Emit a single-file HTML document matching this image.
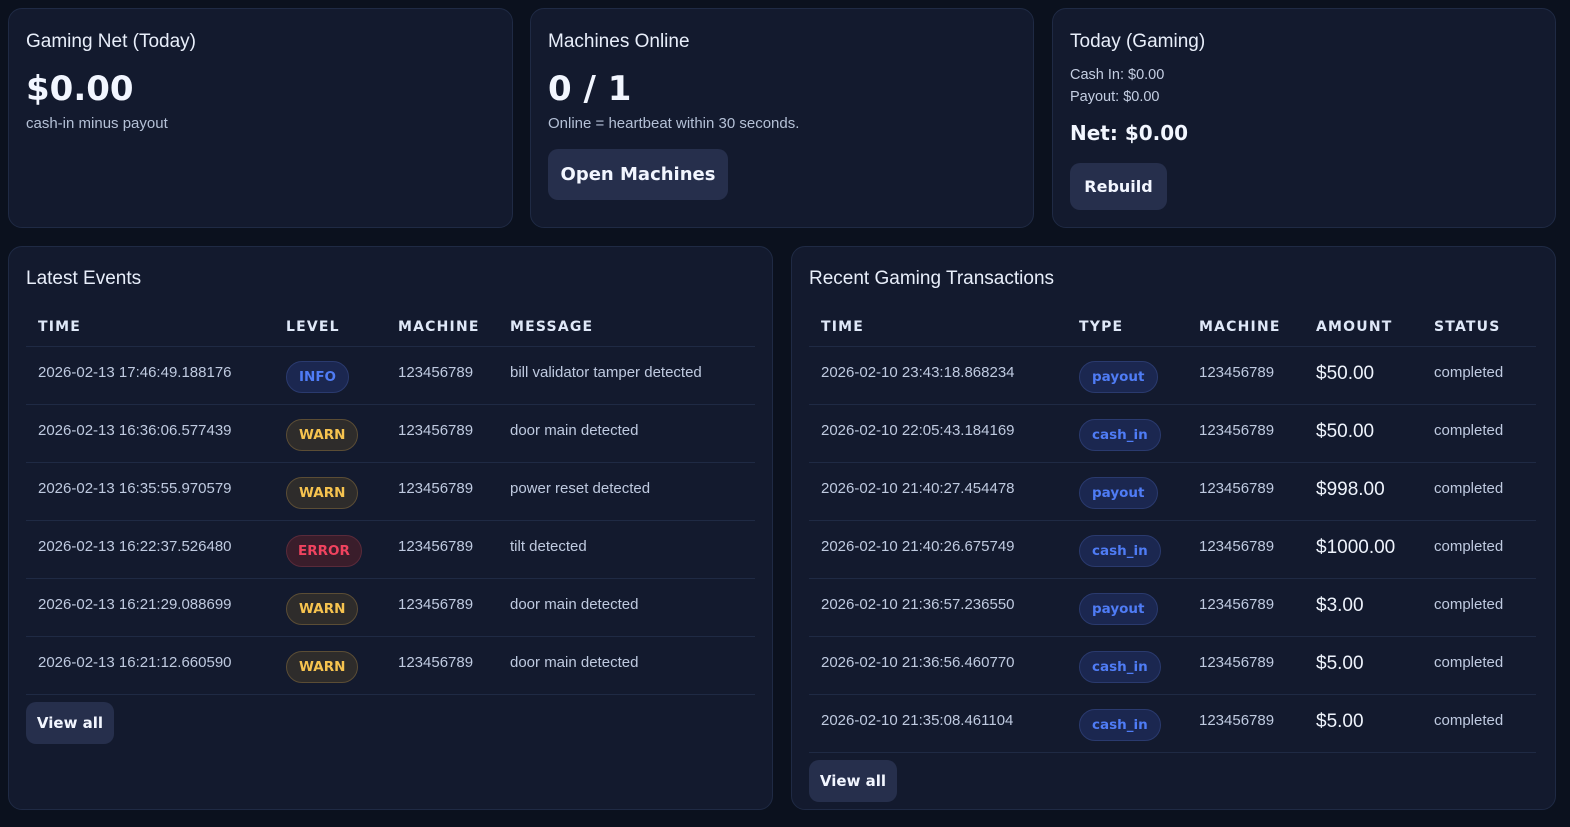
<!DOCTYPE html>
<html><head><meta charset="utf-8"><style>
*{box-sizing:border-box;margin:0;padding:0}
body{width:1570px;height:827px;background:#0b111e;font-family:"Liberation Sans",sans-serif;color:#e6ecf8;position:relative;overflow:hidden}
.card{position:absolute;background:#131a2e;border:1px solid #1f2a44;border-radius:14px;padding:0 18px}
.t{font-size:19px;color:#e8eefa;position:absolute;left:17px}
.big{font-family:"DejaVu Sans",sans-serif;font-weight:bold;color:#f2f6ff}
.sub{font-size:15px;color:#b4c0d6;position:absolute;left:17px}
.btn{position:absolute;background:#262f4c;border-radius:10px;font-family:"DejaVu Sans",sans-serif;font-weight:bold;color:#f2f6ff;display:flex;align-items:center;justify-content:center}
table{position:absolute;left:17px;top:62px;border-collapse:collapse;font-size:15px}
th{font-family:"DejaVu Sans",sans-serif;font-weight:bold;font-size:14px;letter-spacing:1.2px;text-align:left;color:#dfe8f8;height:37px;padding:0 12px;vertical-align:middle;border-bottom:1px solid #1f2a44}
td{height:58px;padding:17px 12px 0;vertical-align:top;color:#bfcae0;border-bottom:1px solid #1f2a44;white-space:nowrap}
.b{display:inline-block;height:32px;line-height:30px;border-radius:16px;padding:0 12px;font-family:"DejaVu Sans",sans-serif;font-weight:bold;font-size:13.5px;margin-top:-3px;border:1px solid}
.info{background:#1b2750;border-color:#2a3a6e;color:#4f7cf5}
.warn{background:#2e2c2b;border-color:#5b4d35;color:#f6c34f}
.err{background:#3a1d2b;border-color:#5a2a3a;color:#f0435f;padding:0 11px}
.ty{background:#1b2750;border-color:#2a3a6e;color:#4f7cf5;padding:0 12px}
.amt{font-size:19px;color:#eef3fc;padding-top:16px}
</style></head><body>
<div class="card" style="left:8px;top:8px;width:505px;height:220px">
<div class="t" style="top:22px">Gaming Net (Today)</div>
<div class="big" style="position:absolute;left:17px;top:60px;font-size:34px">$0.00</div>
<div class="sub" style="top:106px">cash-in minus payout</div>
</div>
<div class="card" style="left:530px;top:8px;width:504px;height:220px">
<div class="t" style="top:22px">Machines Online</div>
<div class="big" style="position:absolute;left:17px;top:60px;font-size:34px">0 / 1</div>
<div class="sub" style="top:106px">Online = heartbeat within 30 seconds.</div>
<div class="btn" style="left:17px;top:140px;width:180px;height:51px;font-size:18px">Open Machines</div>
</div>
<div class="card" style="left:1052px;top:8px;width:504px;height:220px">
<div class="t" style="top:22px">Today (Gaming)</div>
<div class="sub" style="top:58px;font-size:14.5px;color:#c4cee2">Cash In: $0.00</div>
<div class="sub" style="top:80px;font-size:14.5px;color:#c4cee2">Payout: $0.00</div>
<div class="big" style="position:absolute;left:17px;top:112px;font-size:20px">Net: $0.00</div>
<div class="btn" style="left:17px;top:154px;width:97px;height:47px;font-size:16px">Rebuild</div>
</div>

<div class="card" style="left:8px;top:246px;width:765px;height:564px">
<div class="t" style="top:21px">Latest Events</div>
<table style="width:729px">
<tr><th style="width:248px">TIME</th><th style="width:112px">LEVEL</th><th style="width:112px">MACHINE</th><th>MESSAGE</th></tr>
<tr><td>2026-02-13 17:46:49.188176</td><td><span class="b info">INFO</span></td><td>123456789</td><td>bill validator tamper detected</td></tr>
<tr><td>2026-02-13 16:36:06.577439</td><td><span class="b warn">WARN</span></td><td>123456789</td><td>door main detected</td></tr>
<tr><td>2026-02-13 16:35:55.970579</td><td><span class="b warn">WARN</span></td><td>123456789</td><td>power reset detected</td></tr>
<tr><td>2026-02-13 16:22:37.526480</td><td><span class="b err">ERROR</span></td><td>123456789</td><td>tilt detected</td></tr>
<tr><td>2026-02-13 16:21:29.088699</td><td><span class="b warn">WARN</span></td><td>123456789</td><td>door main detected</td></tr>
<tr><td>2026-02-13 16:21:12.660590</td><td><span class="b warn">WARN</span></td><td>123456789</td><td>door main detected</td></tr>
</table>
<div class="btn" style="left:17px;top:455px;width:88px;height:42px;font-size:15px">View all</div>
</div>

<div class="card" style="left:791px;top:246px;width:765px;height:564px">
<div class="t" style="top:21px">Recent Gaming Transactions</div>
<table style="width:727px">
<tr><th style="width:258px">TIME</th><th style="width:120px">TYPE</th><th style="width:117px">MACHINE</th><th style="width:118px">AMOUNT</th><th>STATUS</th></tr>
<tr><td>2026-02-10 23:43:18.868234</td><td><span class="b ty">payout</span></td><td>123456789</td><td class="amt">$50.00</td><td>completed</td></tr>
<tr><td>2026-02-10 22:05:43.184169</td><td><span class="b ty">cash_in</span></td><td>123456789</td><td class="amt">$50.00</td><td>completed</td></tr>
<tr><td>2026-02-10 21:40:27.454478</td><td><span class="b ty">payout</span></td><td>123456789</td><td class="amt">$998.00</td><td>completed</td></tr>
<tr><td>2026-02-10 21:40:26.675749</td><td><span class="b ty">cash_in</span></td><td>123456789</td><td class="amt">$1000.00</td><td>completed</td></tr>
<tr><td>2026-02-10 21:36:57.236550</td><td><span class="b ty">payout</span></td><td>123456789</td><td class="amt">$3.00</td><td>completed</td></tr>
<tr><td>2026-02-10 21:36:56.460770</td><td><span class="b ty">cash_in</span></td><td>123456789</td><td class="amt">$5.00</td><td>completed</td></tr>
<tr><td>2026-02-10 21:35:08.461104</td><td><span class="b ty">cash_in</span></td><td>123456789</td><td class="amt">$5.00</td><td>completed</td></tr>
</table>
<div class="btn" style="left:17px;top:513px;width:88px;height:42px;font-size:15px">View all</div>
</div>
</body></html>
